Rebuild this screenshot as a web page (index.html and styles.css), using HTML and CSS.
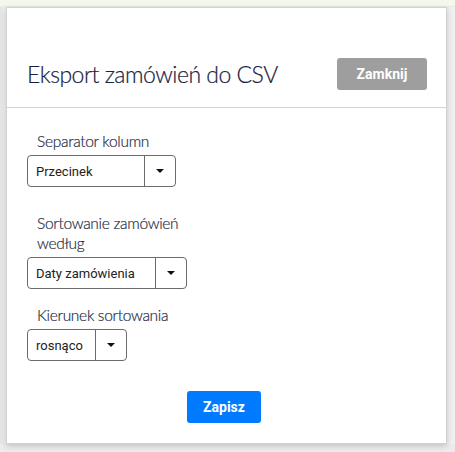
FILE: index.html
```html
<!DOCTYPE html>
<html lang="pl">
<head>
<meta charset="utf-8">
<title>Eksport zamówień do CSV</title>
<link rel="stylesheet" href="styles.css">
</head>
<body>
<div class="topbar"></div>
<div class="backdrop">
  <div class="modal">
    <div class="modal-header">
      <h1 class="modal-title">Eksport zamówień do CSV</h1>
      <button class="btn btn-close" type="button">Zamknij</button>
    </div>
    <div class="modal-body">
      <div class="field field-first">
        <div class="label">Separator kolumn</div>
        <div class="select select-sep">
          <span class="select-value">Przecinek</span>
          <span class="select-arrow"><span class="caret"></span></span>
        </div>
      </div>
      <div class="field field-second">
        <div class="label label-narrow">Sortowanie zamówień według</div>
        <div class="select select-sort">
          <span class="select-value">Daty zamówienia</span>
          <span class="select-arrow"><span class="caret"></span></span>
        </div>
      </div>
      <div class="field field-third">
        <div class="label">Kierunek sortowania</div>
        <div class="select select-dir">
          <span class="select-value">rosnąco</span>
          <span class="select-arrow"><span class="caret"></span></span>
        </div>
      </div>
      <div class="actions">
        <button class="btn btn-save" type="button">Zapisz</button>
      </div>
    </div>
  </div>
</div>
</body>
</html>
```
FILE: styles.css
```css
html, body {
  margin: 0;
  padding: 0;
}
body {
  background: #ececec;
  font-family: Lato, "Noto Sans", sans-serif;
  width: 455px;
  height: 452px;
  overflow: hidden;
}
.topbar {
  height: 7px;
  background: #f3f7ed;
  border-bottom: 1px solid #e6ece0;
  box-sizing: border-box;
}
.backdrop {
  padding: 0 8px 0 6px;
  background: linear-gradient(90deg, #e4e4e4 0, #f0f0f0 6px);
}
.modal {
  width: 441px;
  height: 437px;
  box-sizing: border-box;
  background: #fff;
  border: 1px solid #d2d2d2;
  box-shadow: 0 2px 6px rgba(0,0,0,0.18);
  display: flex;
  flex-direction: column;
}
.modal-header {
  display: flex;
  align-items: center;
  justify-content: space-between;
  padding: 50px 19px 17px 20px;
  border-bottom: 1px solid #d4d4d4;
}
.modal-title {
  margin: 0;
  font-family: Lato, "Noto Sans", sans-serif;
  font-weight: 300;
  font-size: 23px;
  letter-spacing: -0.5px;
  color: #1a2240;
  line-height: 32px;
  -webkit-text-stroke: 0.2px #1a2240;
}
.btn {
  border: none;
  border-radius: 3px;
  color: #fff;
  font-family: Roboto, "Liberation Sans", sans-serif;
  font-weight: 700;
  font-size: 14px;
  height: 32px;
  padding: 0;
  cursor: pointer;
}
.btn-close {
  background: #9e9e9e;
  width: 90px;
}
.modal-body {
  padding: 23px 20px 20px 20px;
  display: flex;
  flex-direction: column;
  flex: 1;
}
.field {
  display: flex;
  flex-direction: column;
  align-items: flex-start;
}
.field-second {
  margin-top: 26px;
}
.field-third {
  margin-top: 16px;
}
.label {
  font-family: Lato, "Noto Sans", sans-serif;
  font-weight: 300;
  font-size: 15.5px;
  line-height: 20px;
  color: #262c45;
  -webkit-text-stroke: 0.2px #262c45;
  padding-left: 10px;
  margin-bottom: 4px;
  letter-spacing: -0.3px;
}
.label-narrow {
  width: 160px;
}
.select {
  display: flex;
  height: 32px;
  box-sizing: border-box;
  border: 1px solid #6b6b6b;
  border-radius: 4px;
  background: #fff;
}
.select-value {
  font-family: Roboto, "Liberation Sans", sans-serif;
  font-size: 13px;
  color: #222;
  display: flex;
  align-items: center;
  padding-left: 8px;
  box-sizing: border-box;
}
.select-sep .select-value { width: 116px; }
.select-sort .select-value { width: 127px; }
.select-dir .select-value { width: 67px; }
.select-arrow {
  width: 30px;
  border-left: 1px solid #6b6b6b;
  display: flex;
  align-items: center;
  justify-content: center;
}
.caret {
  width: 0;
  height: 0;
  border-left: 4px solid transparent;
  border-right: 4px solid transparent;
  border-top: 4px solid #111;
}
.actions {
  margin-top: 30px;
  display: flex;
  justify-content: center;
  padding-right: 5px;
}
.btn-save {
  background: #007bff;
  width: 74px;
}
```
